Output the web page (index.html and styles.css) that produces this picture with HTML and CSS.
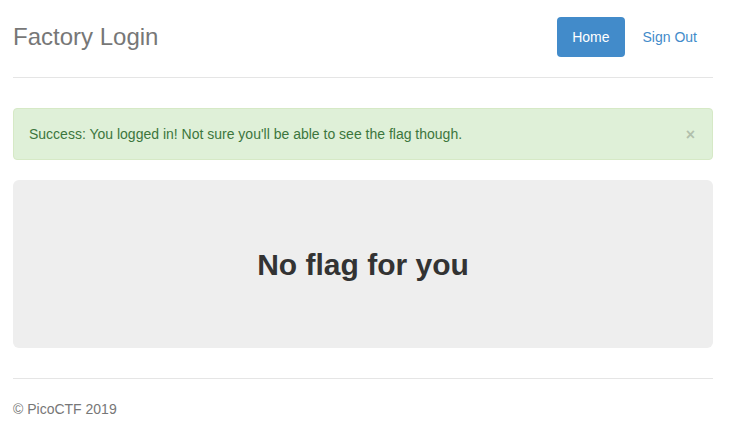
FILE: index.html
```html
<!DOCTYPE html>
<html>
<head>
<meta charset="utf-8">
<title>Factory Login</title>
<link rel="stylesheet" href="styles.css">
</head>
<body>
<div class="container">
  <div class="header">
    <h3 class="brand">Factory Login</h3>
    <ul class="nav-pills">
      <li><a class="pill active" href="#">Home</a></li>
      <li><a class="pill" href="#">Sign Out</a></li>
    </ul>
  </div>
  <div class="alert">
    <span>Success: You logged in! Not sure you'll be able to see the flag though.</span>
    <button class="close" type="button">&times;</button>
  </div>
  <div class="jumbotron">
    <h2 class="headline">No flag for you</h2>
  </div>
  <footer class="footer">
    <p>&copy; PicoCTF 2019</p>
  </footer>
</div>
</body>
</html>
```
FILE: styles.css
```css
* { box-sizing: border-box; }
body {
  margin: 0;
  padding-top: 17px;
  font-family: "Liberation Sans", Arial, Helvetica, sans-serif;
  font-size: 14px;
  line-height: 20px;
  color: #333;
  background: #fff;
}
.container {
  width: 700px;
  margin-left: 13px;
}
.header {
  display: flex;
  justify-content: space-between;
  align-items: flex-start;
  padding-bottom: 20px;
  border-bottom: 1px solid #e5e5e5;
}
.brand {
  margin: 0;
  font-size: 24px;
  font-weight: 400;
  line-height: 40px;
  color: #777;
}
.nav-pills {
  display: flex;
  gap: 3px;
  list-style: none;
  margin: 0 1px 0 0;
  padding: 0;
}
.pill {
  display: block;
  padding: 10px 15px;
  border-radius: 4px;
  color: #428bca;
  text-decoration: none;
}
.pill.active {
  background: #428bca;
  color: #fff;
}
.alert {
  display: flex;
  justify-content: space-between;
  align-items: center;
  margin-top: 30px;
  margin-bottom: 20px;
  padding: 15px;
  border: 1px solid #d6e9c6;
  border-radius: 4px;
  background: #dff0d8;
  color: #3c763d;
}
.close {
  border: 0;
  background: transparent;
  padding: 0;
  margin-right: 2px;
  margin-top: 2px;
  font-family: "Liberation Sans", Arial, sans-serif;
  font-size: 16px;
  font-weight: 700;
  line-height: 1;
  color: #000;
  opacity: 0.2;
  cursor: pointer;
}
.jumbotron {
  height: 168px;
  display: flex;
  align-items: center;
  justify-content: center;
  margin-bottom: 30px;
  border-radius: 6px;
  background: #eee;
}
.headline {
  margin: 0;
  padding-top: 0;
  font-size: 30px;
  font-weight: 700;
  line-height: 33px;
  color: #333;
}
.footer {
  padding-top: 19px;
  border-top: 1px solid #e5e5e5;
  color: #777;
}
.footer p {
  margin: 0;
  padding-top: 1px;
}
```
